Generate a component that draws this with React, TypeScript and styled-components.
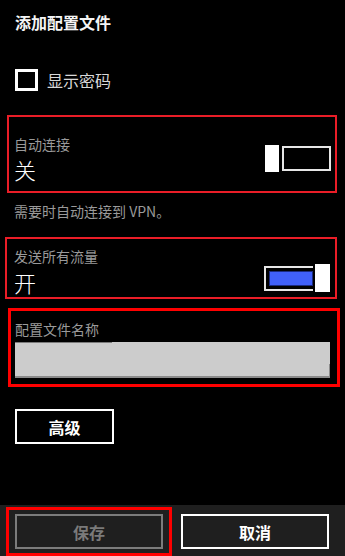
import React from "react";
import styled, { createGlobalStyle } from "styled-components";

const Global = createGlobalStyle`
  html, body { margin: 0; padding: 0; background: #000; }
  body { font-family: "Noto Sans CJK SC", "Noto Sans", sans-serif; }
  * { box-sizing: border-box; }
`;

const Page = styled.div`
  width: 345px;
  height: 556px;
  display: flex;
  flex-direction: column;
  background: #000;
  overflow: hidden;
`;

const Content = styled.div`
  flex: 1;
  display: flex;
  flex-direction: column;
  align-items: flex-start;
`;

const Title = styled.div`
  margin: 12px 0 0 15px;
  font-size: 16px;
  line-height: 20px;
  font-weight: 700;
  color: #f4f4f4;
`;

const CheckRow = styled.label`
  margin: 37px 0 0 15px;
  display: flex;
  align-items: center;
  gap: 9px;
`;

const CheckBox = styled.span`
  width: 23px;
  height: 22px;
  border: 3px solid #fff;
  display: block;
`;

const CheckLabel = styled.span`
  font-size: 16px;
  line-height: 20px;
  color: #d8d8d8;
`;

const Highlight = styled.div<{ $left: number; $width: number; $top: number; $bw: number; $color: string; $pad: string }>`
  margin: ${(p) => p.$top}px 0 0 ${(p) => p.$left}px;
  width: ${(p) => p.$width}px;
  border: ${(p) => p.$bw}px solid ${(p) => p.$color};
  padding: ${(p) => p.$pad};
`;

const ToggleRow = styled.div`
  display: flex;
  justify-content: space-between;
  align-items: flex-end;
`;

const Col = styled.div`
  display: flex;
  flex-direction: column;
`;

const FieldLabel = styled.div<{ $gap?: number }>`
  font-size: 14px;
  line-height: 18px;
  color: #9a9a9a;
  margin-bottom: ${(p) => p.$gap ?? 0}px;
`;

const Value = styled.div`
  font-size: 22px;
  line-height: 26px;
  font-weight: 300;
  color: #fff;
`;

const Switch = styled.div<{ $mb: number }>`
  display: flex;
  align-items: center;
  gap: 3px;
  margin-bottom: ${(p) => p.$mb}px;
`;

const OnSwitch = styled(Switch)`
  gap: 2px;
`;

const Thumb = styled.div`
  width: 14px;
  height: 27px;
  background: #fff;
`;

const OnThumb = styled(Thumb)`
  width: 15px;
  height: 28px;
`;

const TrackOff = styled.div`
  width: 49px;
  height: 25px;
  border: 2px solid #e6e6e6;
`;

const TrackOn = styled.div`
  width: 49px;
  height: 25px;
  border: 2px solid #e6e6e6;
  border-right: none;
  padding: 3px 0 3px 3px;
`;

const Fill = styled.div`
  width: 100%;
  height: 100%;
  background: #4060f8;
  border: 1px solid #1a2a80;
`;

const Description = styled.div`
  margin: 9px 0 0 14px;
  font-size: 14px;
  line-height: 18px;
  color: #9a9a9a;
`;

const Input = styled.div`
  position: relative;
  width: 315px;
  height: 36px;
  background: #cccccc;
  border-bottom: 2px solid #8a8a8a;
  &::before {
    content: "";
    position: absolute;
    left: 0;
    top: 0;
    width: 97px;
    height: 1px;
    background: #7a7a7a;
  }
  &::after {
    content: "";
    position: absolute;
    right: 0;
    bottom: 0;
    width: 1px;
    height: 12px;
    background: #8a8a8a;
  }
`;

const Button = styled.button<{ $disabled?: boolean }>`
  height: 35px;
  background: transparent;
  border: 2px solid ${(p) => (p.$disabled ? "#7c7c7c" : "#fff")};
  color: ${(p) => (p.$disabled ? "#7a7a7a" : "#fff")};
  font-family: "Noto Sans CJK SC", "Noto Sans", sans-serif;
  font-size: 16px;
  font-weight: 700;
  padding: 0;
  display: flex;
  align-items: center;
  justify-content: center;
`;

const AdvancedButton = styled(Button)`
  margin: 22px 0 0 15px;
  width: 99px;
`;

const BottomBar = styled.div`
  height: 51px;
  background: #1f1f1f;
  display: flex;
  align-items: flex-start;
  padding-top: 2px;
`;

const SaveFrame = styled.div`
  margin-left: 6px;
  width: 166px;
  height: 49px;
  border: 3px solid #ff0000;
  padding: 4px 5px 3px 6px;
`;

const BarButton = styled(Button)`
  width: 148px;
`;

const CancelButton = styled(BarButton)`
  margin: 7px 0 0 9px;
  width: 148px;
`;

export default function App() {
  return (
    <Page>
      <Global />
      <Content>
        <Title>添加配置文件</Title>
        <CheckRow>
          <CheckBox />
          <CheckLabel>显示密码</CheckLabel>
        </CheckRow>

        <Highlight $left={7} $width={330} $top={24} $bw={2} $color="#ea1d27" $pad="18px 4px 9px 5px">
          <ToggleRow>
            <Col>
              <FieldLabel $gap={3}>自动连接</FieldLabel>
              <Value>关</Value>
            </Col>
            <Switch $mb={10}>
              <Thumb />
              <TrackOff />
            </Switch>
          </ToggleRow>
        </Highlight>

        <Description>需要时自动连接到 VPN。</Description>

        <Highlight $left={5} $width={332} $top={17} $bw={2} $color="#ea1d27" $pad="8px 5px 2px 7px">
          <ToggleRow>
            <Col>
              <FieldLabel $gap={4}>发送所有流量</FieldLabel>
              <Value>开</Value>
            </Col>
            <OnSwitch $mb={3}>
              <TrackOn>
                <Fill />
              </TrackOn>
              <OnThumb />
            </OnSwitch>
          </ToggleRow>
        </Highlight>

        <Highlight $left={8} $width={332} $top={9} $bw={3} $color="#ff0000" $pad="9px 4px 6px 4px">
          <FieldLabel $gap={4}>配置文件名称</FieldLabel>
          <Input />
        </Highlight>

        <AdvancedButton>高级</AdvancedButton>
      </Content>
      <BottomBar>
        <SaveFrame>
          <BarButton $disabled>保存</BarButton>
        </SaveFrame>
        <CancelButton>取消</CancelButton>
      </BottomBar>
    </Page>
  );
}
